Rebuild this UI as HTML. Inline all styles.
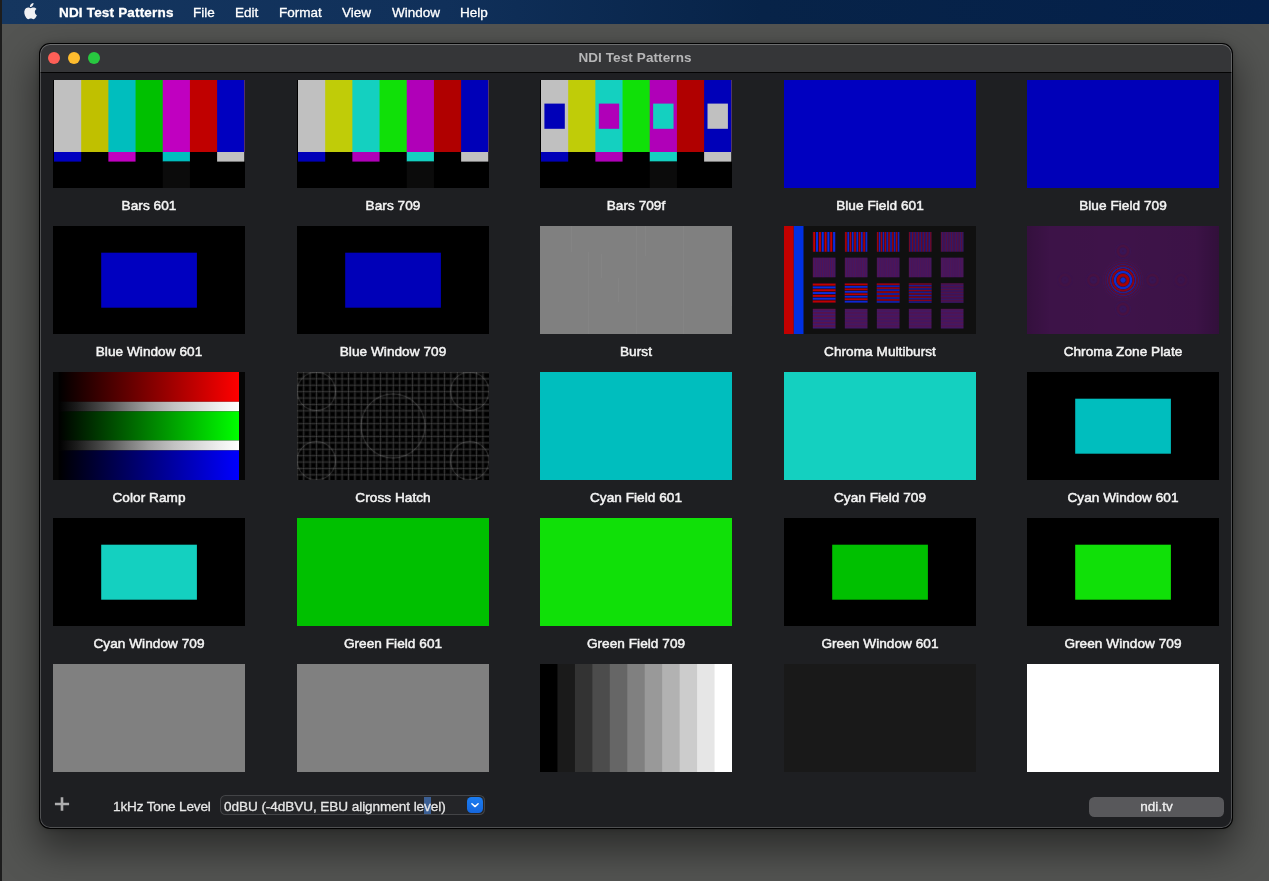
<!DOCTYPE html>
<html><head><meta charset="utf-8"><title>NDI Test Patterns</title>
<style>
html,body{margin:0;padding:0}
body{width:1269px;height:881px;overflow:hidden;position:relative;background:#535452;font-family:"Liberation Sans",sans-serif;-webkit-font-smoothing:antialiased}
#strip{position:absolute;left:0;top:0;width:2px;height:881px;background:#1d1d1d;z-index:5}
#menubar{position:absolute;left:2px;top:0;width:1267px;height:24px;background:linear-gradient(90deg,#15365f 0%,#10305a 35%,#072348 60%,#04204a 100%);color:#fff;font-size:13.5px;z-index:4}
#menubar span{will-change:transform;position:absolute;top:1px;margin-left:1px;-webkit-text-stroke:0.3px #fff;line-height:24px;white-space:nowrap}
#win{position:absolute;left:40px;top:44px;width:1192px;height:784px;border-radius:10px;background:#1e1f22;box-shadow:0 0 0 1px #000, 0 18px 38px 4px rgba(0,0,0,.48),0 0 6px rgba(0,0,0,.3);overflow:hidden}
#win:after{content:"";position:absolute;inset:0;border-radius:10px;box-shadow:inset 0 0 0 1px rgba(255,255,255,.22),inset 0 1px 0 rgba(255,255,255,.08);pointer-events:none}
#title{position:absolute;left:0;top:0;width:1192px;height:28px;background:#353638;border-bottom:1px solid #030303}
#title b{will-change:transform;position:absolute;left:0;width:1190px;text-align:center;top:0;line-height:28px;font-size:13.5px;color:#b6b6b7;letter-spacing:0.1px}
.tl{position:absolute;top:8px;width:12px;height:12px;border-radius:50%}
#clip{position:absolute;left:0;top:29px;width:1192px;height:707px;overflow:hidden}
.th{position:absolute;width:192px;height:108px;overflow:hidden}
.th svg{display:block}
.lb,.gs{will-change:transform}
.lb{position:absolute;width:260px;text-align:center;font-size:13.6px;font-weight:normal;-webkit-text-stroke:0.5px #f4f4f4;letter-spacing:0.05px;margin-top:0.6px;color:#f4f4f4;line-height:16px;white-space:nowrap}
#bot{position:absolute;left:0;top:736px;width:1192px;height:48px}
</style></head><body>
<div id="strip"></div>
<div id="menubar">
<svg style="position:absolute;left:21px;top:2px" width="15.3" height="19.6" viewBox="0 0 14 18" preserveAspectRatio="none"><path fill="#f1f1f3" d="M9.6 1c.1 1-.3 1.900-.85 2.550-.6.700-1.500 1.200-2.400 1.130-.1-.95.350-1.900.9-2.500C7.850 1.500 8.850 1.050 9.600 1zM12.400 6.500c-.1.060-1.600.900-1.580 2.700.02 2.100 1.880 2.820 1.900 2.830-.02.050-.300 1.020-.98 2-.6.860-1.200 1.700-2.180 1.720-.95.020-1.260-.560-2.350-.560s-1.430.540-2.330.580c-.940.030-1.650-.920-2.250-1.770C1.420 12.250.500 9.050 1.750 6.900c.620-1.080 1.730-1.760 2.930-1.780.920-.020 1.780.620 2.350.620.560 0 1.610-.760 2.720-.650.460.020 1.760.190 2.600 1.400z"/></svg>
<span style="left:56px;font-weight:bold;letter-spacing:0.18px">NDI Test Patterns</span>
<span style="left:190px">File</span>
<span style="left:232px">Edit</span>
<span style="left:276px">Format</span>
<span style="left:339px">View</span>
<span style="left:389px">Window</span>
<span style="left:457px">Help</span>
</div>
<div id="win">
<div id="title"><i class="tl" style="left:8px;background:#fe5f57"></i><i class="tl" style="left:28px;background:#febc2e"></i><i class="tl" style="left:48px;background:#28c840"></i><b>NDI Test Patterns</b></div>
<div id="clip">
<div class="th" style="left:13px;top:7px"><svg width="192" height="108" viewBox="0 0 192 108"><rect width="192" height="108" fill="#000"/><rect x="1.00" y="0" width="190.30" height="72" fill="#c0c0c0"/><rect x="28.19" y="0" width="163.11" height="72" fill="#c0c000"/><rect x="55.37" y="0" width="135.93" height="72" fill="#00bebe"/><rect x="82.56" y="0" width="108.74" height="72" fill="#00c000"/><rect x="109.74" y="0" width="81.56" height="72" fill="#c000c0"/><rect x="136.93" y="0" width="54.37" height="72" fill="#c00000"/><rect x="164.11" y="0" width="27.19" height="72" fill="#0000c0"/><rect x="1.00" y="72" width="27.19" height="9.6" fill="#0000c0"/><rect x="55.37" y="72" width="27.19" height="9.6" fill="#c000c0"/><rect x="109.74" y="72" width="27.19" height="9.6" fill="#00bebe"/><rect x="164.11" y="72" width="27.19" height="9.6" fill="#c0c0c0"/><rect x="109.74" y="81.6" width="27.19" height="26.4" fill="#0b0b0b"/></svg></div>
<div class="lb" style="left:-21px;top:124px">Bars 601</div>
<div class="th" style="left:257px;top:7px"><svg width="192" height="108" viewBox="0 0 192 108"><rect width="192" height="108" fill="#000"/><rect x="1.00" y="0" width="190.30" height="72" fill="#c0c0c0"/><rect x="28.19" y="0" width="163.11" height="72" fill="#c0cc08"/><rect x="55.37" y="0" width="135.93" height="72" fill="#14d0c0"/><rect x="82.56" y="0" width="108.74" height="72" fill="#10e008"/><rect x="109.74" y="0" width="81.56" height="72" fill="#b000b8"/><rect x="136.93" y="0" width="54.37" height="72" fill="#b00000"/><rect x="164.11" y="0" width="27.19" height="72" fill="#0000b8"/><rect x="1.00" y="72" width="27.19" height="9.6" fill="#0000b8"/><rect x="55.37" y="72" width="27.19" height="9.6" fill="#b000b8"/><rect x="109.74" y="72" width="27.19" height="9.6" fill="#14d0c0"/><rect x="164.11" y="72" width="27.19" height="9.6" fill="#c0c0c0"/><rect x="109.74" y="81.6" width="27.19" height="26.4" fill="#0b0b0b"/></svg></div>
<div class="lb" style="left:223px;top:124px">Bars 709</div>
<div class="th" style="left:500px;top:7px"><svg width="192" height="108" viewBox="0 0 192 108"><rect width="192" height="108" fill="#000"/><rect x="1.00" y="0" width="190.30" height="72" fill="#c0c0c0"/><rect x="28.19" y="0" width="163.11" height="72" fill="#c0cc08"/><rect x="55.37" y="0" width="135.93" height="72" fill="#14d0c0"/><rect x="82.56" y="0" width="108.74" height="72" fill="#10e008"/><rect x="109.74" y="0" width="81.56" height="72" fill="#b000b8"/><rect x="136.93" y="0" width="54.37" height="72" fill="#b00000"/><rect x="164.11" y="0" width="27.19" height="72" fill="#0000b8"/><rect x="1.00" y="72" width="27.19" height="9.6" fill="#0000b8"/><rect x="55.37" y="72" width="27.19" height="9.6" fill="#b000b8"/><rect x="109.74" y="72" width="27.19" height="9.6" fill="#14d0c0"/><rect x="164.11" y="72" width="27.19" height="9.6" fill="#c0c0c0"/><rect x="109.74" y="81.6" width="27.19" height="26.4" fill="#0b0b0b"/><rect x="4.40" y="23.6" width="20.4" height="25.2" fill="#0000b8"/><rect x="58.77" y="23.6" width="20.4" height="25.2" fill="#b000b8"/><rect x="113.14" y="23.6" width="20.4" height="25.2" fill="#14d0c0"/><rect x="167.51" y="23.6" width="20.4" height="25.2" fill="#c0c0c0"/></svg></div>
<div class="lb" style="left:466px;top:124px">Bars 709f</div>
<div class="th" style="left:744px;top:7px"><div style="width:192px;height:108px;background:#0000c0"></div></div>
<div class="lb" style="left:710px;top:124px">Blue Field 601</div>
<div class="th" style="left:987px;top:7px"><div style="width:192px;height:108px;background:#0000b8"></div></div>
<div class="lb" style="left:953px;top:124px">Blue Field 709</div>
<div class="th" style="left:13px;top:153px"><svg width="192" height="108" viewBox="0 0 192 108" ><rect width="192" height="108" fill="#000"/><rect x="48.2" y="26.7" width="95.7" height="55" fill="#0000c0"/></svg></div>
<div class="lb" style="left:-21px;top:270px">Blue Window 601</div>
<div class="th" style="left:257px;top:153px"><svg width="192" height="108" viewBox="0 0 192 108" ><rect width="192" height="108" fill="#000"/><rect x="48.2" y="26.7" width="95.7" height="55" fill="#0000b8"/></svg></div>
<div class="lb" style="left:223px;top:270px">Blue Window 709</div>
<div class="th" style="left:500px;top:153px"><svg width="192" height="108" viewBox="0 0 192 108" ><rect width="192" height="108" fill="#808080"/><rect x="48" y="26" width="1" height="82" fill="#fff" fill-opacity="0.035"/><rect x="96" y="0" width="1" height="108" fill="#fff" fill-opacity="0.035"/><rect x="143" y="0" width="1" height="108" fill="#fff" fill-opacity="0.035"/><rect x="31" y="0" width="1" height="26" fill="#fff" fill-opacity="0.035"/><rect x="61" y="28" width="1" height="24" fill="#fff" fill-opacity="0.035"/><rect x="78" y="52" width="1" height="24" fill="#fff" fill-opacity="0.035"/><rect x="105" y="0" width="1" height="30" fill="#fff" fill-opacity="0.035"/><rect x="191" y="26" width="1" height="54" fill="#fff" fill-opacity="0.035"/></svg></div>
<div class="lb" style="left:466px;top:270px">Burst</div>
<div class="th" style="left:744px;top:153px"><svg width="192" height="108" viewBox="0 0 192 108" ><rect width="192" height="108" fill="#101010"/><rect x="0" y="0" width="9.8" height="108" fill="#c20000"/><rect x="9.8" y="0" width="9.7" height="108" fill="#0030e2"/><rect x="28.80" y="6.00" width="22.7" height="19.7" fill="#48175a"/><rect x="28.80" y="6.00" width="22.7" height="19.7" fill="#16081a" fill-opacity="0.90"/><rect x="29.20" y="6.00" width="2.04" height="19.7" fill="#c20000" fill-opacity="1.0"/><rect x="32.03" y="6.00" width="2.04" height="19.7" fill="#0a2ce0" fill-opacity="1.0"/><rect x="34.87" y="6.00" width="2.04" height="19.7" fill="#c20000" fill-opacity="1.0"/><rect x="37.71" y="6.00" width="2.04" height="19.7" fill="#0a2ce0" fill-opacity="1.0"/><rect x="40.55" y="6.00" width="2.04" height="19.7" fill="#c20000" fill-opacity="1.0"/><rect x="43.38" y="6.00" width="2.04" height="19.7" fill="#0a2ce0" fill-opacity="1.0"/><rect x="46.22" y="6.00" width="2.04" height="19.7" fill="#c20000" fill-opacity="1.0"/><rect x="49.06" y="6.00" width="2.04" height="19.7" fill="#0a2ce0" fill-opacity="1.0"/><rect x="60.80" y="6.00" width="22.7" height="19.7" fill="#48175a"/><rect x="60.80" y="6.00" width="22.7" height="19.7" fill="#16081a" fill-opacity="0.81"/><rect x="61.12" y="6.00" width="1.63" height="19.7" fill="#c20000" fill-opacity="0.9"/><rect x="63.39" y="6.00" width="1.63" height="19.7" fill="#0a2ce0" fill-opacity="0.9"/><rect x="65.66" y="6.00" width="1.63" height="19.7" fill="#c20000" fill-opacity="0.9"/><rect x="67.93" y="6.00" width="1.63" height="19.7" fill="#0a2ce0" fill-opacity="0.9"/><rect x="70.20" y="6.00" width="1.63" height="19.7" fill="#c20000" fill-opacity="0.9"/><rect x="72.47" y="6.00" width="1.63" height="19.7" fill="#0a2ce0" fill-opacity="0.9"/><rect x="74.74" y="6.00" width="1.63" height="19.7" fill="#c20000" fill-opacity="0.9"/><rect x="77.01" y="6.00" width="1.63" height="19.7" fill="#0a2ce0" fill-opacity="0.9"/><rect x="79.28" y="6.00" width="1.63" height="19.7" fill="#c20000" fill-opacity="0.9"/><rect x="81.55" y="6.00" width="1.63" height="19.7" fill="#0a2ce0" fill-opacity="0.9"/><rect x="92.80" y="6.00" width="22.7" height="19.7" fill="#48175a"/><rect x="92.80" y="6.00" width="22.7" height="19.7" fill="#16081a" fill-opacity="0.72"/><rect x="93.06" y="6.00" width="1.36" height="19.7" fill="#c20000" fill-opacity="0.8"/><rect x="94.96" y="6.00" width="1.36" height="19.7" fill="#0a2ce0" fill-opacity="0.8"/><rect x="96.85" y="6.00" width="1.36" height="19.7" fill="#c20000" fill-opacity="0.8"/><rect x="98.74" y="6.00" width="1.36" height="19.7" fill="#0a2ce0" fill-opacity="0.8"/><rect x="100.63" y="6.00" width="1.36" height="19.7" fill="#c20000" fill-opacity="0.8"/><rect x="102.52" y="6.00" width="1.36" height="19.7" fill="#0a2ce0" fill-opacity="0.8"/><rect x="104.41" y="6.00" width="1.36" height="19.7" fill="#c20000" fill-opacity="0.8"/><rect x="106.31" y="6.00" width="1.36" height="19.7" fill="#0a2ce0" fill-opacity="0.8"/><rect x="108.20" y="6.00" width="1.36" height="19.7" fill="#c20000" fill-opacity="0.8"/><rect x="110.09" y="6.00" width="1.36" height="19.7" fill="#0a2ce0" fill-opacity="0.8"/><rect x="111.98" y="6.00" width="1.36" height="19.7" fill="#c20000" fill-opacity="0.8"/><rect x="113.87" y="6.00" width="1.36" height="19.7" fill="#0a2ce0" fill-opacity="0.8"/><rect x="124.80" y="6.00" width="22.7" height="19.7" fill="#48175a"/><rect x="124.80" y="6.00" width="22.7" height="19.7" fill="#16081a" fill-opacity="0.41"/><rect x="125.01" y="6.00" width="1.09" height="19.7" fill="#c20000" fill-opacity="0.45"/><rect x="126.53" y="6.00" width="1.09" height="19.7" fill="#0a2ce0" fill-opacity="0.45"/><rect x="128.04" y="6.00" width="1.09" height="19.7" fill="#c20000" fill-opacity="0.45"/><rect x="129.55" y="6.00" width="1.09" height="19.7" fill="#0a2ce0" fill-opacity="0.45"/><rect x="131.07" y="6.00" width="1.09" height="19.7" fill="#c20000" fill-opacity="0.45"/><rect x="132.58" y="6.00" width="1.09" height="19.7" fill="#0a2ce0" fill-opacity="0.45"/><rect x="134.09" y="6.00" width="1.09" height="19.7" fill="#c20000" fill-opacity="0.45"/><rect x="135.61" y="6.00" width="1.09" height="19.7" fill="#0a2ce0" fill-opacity="0.45"/><rect x="137.12" y="6.00" width="1.09" height="19.7" fill="#c20000" fill-opacity="0.45"/><rect x="138.63" y="6.00" width="1.09" height="19.7" fill="#0a2ce0" fill-opacity="0.45"/><rect x="140.15" y="6.00" width="1.09" height="19.7" fill="#c20000" fill-opacity="0.45"/><rect x="141.66" y="6.00" width="1.09" height="19.7" fill="#0a2ce0" fill-opacity="0.45"/><rect x="143.17" y="6.00" width="1.09" height="19.7" fill="#c20000" fill-opacity="0.45"/><rect x="144.69" y="6.00" width="1.09" height="19.7" fill="#0a2ce0" fill-opacity="0.45"/><rect x="146.20" y="6.00" width="1.09" height="19.7" fill="#c20000" fill-opacity="0.45"/><rect x="156.80" y="6.00" width="22.7" height="19.7" fill="#48175a"/><rect x="156.80" y="6.00" width="22.7" height="19.7" fill="#16081a" fill-opacity="0.20"/><rect x="156.98" y="6.00" width="0.91" height="19.7" fill="#c20000" fill-opacity="0.22"/><rect x="158.24" y="6.00" width="0.91" height="19.7" fill="#0a2ce0" fill-opacity="0.22"/><rect x="159.50" y="6.00" width="0.91" height="19.7" fill="#c20000" fill-opacity="0.22"/><rect x="160.76" y="6.00" width="0.91" height="19.7" fill="#0a2ce0" fill-opacity="0.22"/><rect x="162.02" y="6.00" width="0.91" height="19.7" fill="#c20000" fill-opacity="0.22"/><rect x="163.28" y="6.00" width="0.91" height="19.7" fill="#0a2ce0" fill-opacity="0.22"/><rect x="164.54" y="6.00" width="0.91" height="19.7" fill="#c20000" fill-opacity="0.22"/><rect x="165.80" y="6.00" width="0.91" height="19.7" fill="#0a2ce0" fill-opacity="0.22"/><rect x="167.07" y="6.00" width="0.91" height="19.7" fill="#c20000" fill-opacity="0.22"/><rect x="168.33" y="6.00" width="0.91" height="19.7" fill="#0a2ce0" fill-opacity="0.22"/><rect x="169.59" y="6.00" width="0.91" height="19.7" fill="#c20000" fill-opacity="0.22"/><rect x="170.85" y="6.00" width="0.91" height="19.7" fill="#0a2ce0" fill-opacity="0.22"/><rect x="172.11" y="6.00" width="0.91" height="19.7" fill="#c20000" fill-opacity="0.22"/><rect x="173.37" y="6.00" width="0.91" height="19.7" fill="#0a2ce0" fill-opacity="0.22"/><rect x="174.63" y="6.00" width="0.91" height="19.7" fill="#c20000" fill-opacity="0.22"/><rect x="175.89" y="6.00" width="0.91" height="19.7" fill="#0a2ce0" fill-opacity="0.22"/><rect x="177.15" y="6.00" width="0.91" height="19.7" fill="#c20000" fill-opacity="0.22"/><rect x="178.42" y="6.00" width="0.91" height="19.7" fill="#0a2ce0" fill-opacity="0.22"/><rect x="28.80" y="31.60" width="22.7" height="19.7" fill="#48175a"/><rect x="28.80" y="31.60" width="1.14" height="19.7" fill="#c20000" fill-opacity="0.100"/><rect x="29.94" y="31.60" width="1.14" height="19.7" fill="#0a2ce0" fill-opacity="0.100"/><rect x="31.07" y="31.60" width="1.14" height="19.7" fill="#c20000" fill-opacity="0.100"/><rect x="32.20" y="31.60" width="1.14" height="19.7" fill="#0a2ce0" fill-opacity="0.100"/><rect x="33.34" y="31.60" width="1.14" height="19.7" fill="#c20000" fill-opacity="0.100"/><rect x="34.48" y="31.60" width="1.14" height="19.7" fill="#0a2ce0" fill-opacity="0.100"/><rect x="35.61" y="31.60" width="1.14" height="19.7" fill="#c20000" fill-opacity="0.100"/><rect x="36.75" y="31.60" width="1.14" height="19.7" fill="#0a2ce0" fill-opacity="0.100"/><rect x="37.88" y="31.60" width="1.14" height="19.7" fill="#c20000" fill-opacity="0.100"/><rect x="39.02" y="31.60" width="1.14" height="19.7" fill="#0a2ce0" fill-opacity="0.100"/><rect x="40.15" y="31.60" width="1.14" height="19.7" fill="#c20000" fill-opacity="0.100"/><rect x="41.28" y="31.60" width="1.14" height="19.7" fill="#0a2ce0" fill-opacity="0.100"/><rect x="42.42" y="31.60" width="1.14" height="19.7" fill="#c20000" fill-opacity="0.100"/><rect x="43.55" y="31.60" width="1.14" height="19.7" fill="#0a2ce0" fill-opacity="0.100"/><rect x="44.69" y="31.60" width="1.14" height="19.7" fill="#c20000" fill-opacity="0.100"/><rect x="45.83" y="31.60" width="1.14" height="19.7" fill="#0a2ce0" fill-opacity="0.100"/><rect x="46.96" y="31.60" width="1.14" height="19.7" fill="#c20000" fill-opacity="0.100"/><rect x="48.09" y="31.60" width="1.14" height="19.7" fill="#0a2ce0" fill-opacity="0.100"/><rect x="49.23" y="31.60" width="1.14" height="19.7" fill="#c20000" fill-opacity="0.100"/><rect x="50.37" y="31.60" width="1.14" height="19.7" fill="#0a2ce0" fill-opacity="0.100"/><rect x="60.80" y="31.60" width="22.7" height="19.7" fill="#48175a"/><rect x="60.80" y="31.60" width="1.14" height="19.7" fill="#c20000" fill-opacity="0.085"/><rect x="61.93" y="31.60" width="1.14" height="19.7" fill="#0a2ce0" fill-opacity="0.085"/><rect x="63.07" y="31.60" width="1.14" height="19.7" fill="#c20000" fill-opacity="0.085"/><rect x="64.20" y="31.60" width="1.14" height="19.7" fill="#0a2ce0" fill-opacity="0.085"/><rect x="65.34" y="31.60" width="1.14" height="19.7" fill="#c20000" fill-opacity="0.085"/><rect x="66.47" y="31.60" width="1.14" height="19.7" fill="#0a2ce0" fill-opacity="0.085"/><rect x="67.61" y="31.60" width="1.14" height="19.7" fill="#c20000" fill-opacity="0.085"/><rect x="68.75" y="31.60" width="1.14" height="19.7" fill="#0a2ce0" fill-opacity="0.085"/><rect x="69.88" y="31.60" width="1.14" height="19.7" fill="#c20000" fill-opacity="0.085"/><rect x="71.02" y="31.60" width="1.14" height="19.7" fill="#0a2ce0" fill-opacity="0.085"/><rect x="72.15" y="31.60" width="1.14" height="19.7" fill="#c20000" fill-opacity="0.085"/><rect x="73.28" y="31.60" width="1.14" height="19.7" fill="#0a2ce0" fill-opacity="0.085"/><rect x="74.42" y="31.60" width="1.14" height="19.7" fill="#c20000" fill-opacity="0.085"/><rect x="75.55" y="31.60" width="1.14" height="19.7" fill="#0a2ce0" fill-opacity="0.085"/><rect x="76.69" y="31.60" width="1.14" height="19.7" fill="#c20000" fill-opacity="0.085"/><rect x="77.82" y="31.60" width="1.14" height="19.7" fill="#0a2ce0" fill-opacity="0.085"/><rect x="78.96" y="31.60" width="1.14" height="19.7" fill="#c20000" fill-opacity="0.085"/><rect x="80.09" y="31.60" width="1.14" height="19.7" fill="#0a2ce0" fill-opacity="0.085"/><rect x="81.23" y="31.60" width="1.14" height="19.7" fill="#c20000" fill-opacity="0.085"/><rect x="82.36" y="31.60" width="1.14" height="19.7" fill="#0a2ce0" fill-opacity="0.085"/><rect x="92.80" y="31.60" width="22.7" height="19.7" fill="#48175a"/><rect x="92.80" y="31.60" width="1.14" height="19.7" fill="#c20000" fill-opacity="0.070"/><rect x="93.94" y="31.60" width="1.14" height="19.7" fill="#0a2ce0" fill-opacity="0.070"/><rect x="95.07" y="31.60" width="1.14" height="19.7" fill="#c20000" fill-opacity="0.070"/><rect x="96.20" y="31.60" width="1.14" height="19.7" fill="#0a2ce0" fill-opacity="0.070"/><rect x="97.34" y="31.60" width="1.14" height="19.7" fill="#c20000" fill-opacity="0.070"/><rect x="98.47" y="31.60" width="1.14" height="19.7" fill="#0a2ce0" fill-opacity="0.070"/><rect x="99.61" y="31.60" width="1.14" height="19.7" fill="#c20000" fill-opacity="0.070"/><rect x="100.75" y="31.60" width="1.14" height="19.7" fill="#0a2ce0" fill-opacity="0.070"/><rect x="101.88" y="31.60" width="1.14" height="19.7" fill="#c20000" fill-opacity="0.070"/><rect x="103.02" y="31.60" width="1.14" height="19.7" fill="#0a2ce0" fill-opacity="0.070"/><rect x="104.15" y="31.60" width="1.14" height="19.7" fill="#c20000" fill-opacity="0.070"/><rect x="105.28" y="31.60" width="1.14" height="19.7" fill="#0a2ce0" fill-opacity="0.070"/><rect x="106.42" y="31.60" width="1.14" height="19.7" fill="#c20000" fill-opacity="0.070"/><rect x="107.55" y="31.60" width="1.14" height="19.7" fill="#0a2ce0" fill-opacity="0.070"/><rect x="108.69" y="31.60" width="1.14" height="19.7" fill="#c20000" fill-opacity="0.070"/><rect x="109.82" y="31.60" width="1.14" height="19.7" fill="#0a2ce0" fill-opacity="0.070"/><rect x="110.96" y="31.60" width="1.14" height="19.7" fill="#c20000" fill-opacity="0.070"/><rect x="112.09" y="31.60" width="1.14" height="19.7" fill="#0a2ce0" fill-opacity="0.070"/><rect x="113.23" y="31.60" width="1.14" height="19.7" fill="#c20000" fill-opacity="0.070"/><rect x="114.36" y="31.60" width="1.14" height="19.7" fill="#0a2ce0" fill-opacity="0.070"/><rect x="124.80" y="31.60" width="22.7" height="19.7" fill="#48175a"/><rect x="124.80" y="31.60" width="1.14" height="19.7" fill="#c20000" fill-opacity="0.055"/><rect x="125.94" y="31.60" width="1.14" height="19.7" fill="#0a2ce0" fill-opacity="0.055"/><rect x="127.07" y="31.60" width="1.14" height="19.7" fill="#c20000" fill-opacity="0.055"/><rect x="128.20" y="31.60" width="1.14" height="19.7" fill="#0a2ce0" fill-opacity="0.055"/><rect x="129.34" y="31.60" width="1.14" height="19.7" fill="#c20000" fill-opacity="0.055"/><rect x="130.47" y="31.60" width="1.14" height="19.7" fill="#0a2ce0" fill-opacity="0.055"/><rect x="131.61" y="31.60" width="1.14" height="19.7" fill="#c20000" fill-opacity="0.055"/><rect x="132.75" y="31.60" width="1.14" height="19.7" fill="#0a2ce0" fill-opacity="0.055"/><rect x="133.88" y="31.60" width="1.14" height="19.7" fill="#c20000" fill-opacity="0.055"/><rect x="135.01" y="31.60" width="1.14" height="19.7" fill="#0a2ce0" fill-opacity="0.055"/><rect x="136.15" y="31.60" width="1.14" height="19.7" fill="#c20000" fill-opacity="0.055"/><rect x="137.28" y="31.60" width="1.14" height="19.7" fill="#0a2ce0" fill-opacity="0.055"/><rect x="138.42" y="31.60" width="1.14" height="19.7" fill="#c20000" fill-opacity="0.055"/><rect x="139.56" y="31.60" width="1.14" height="19.7" fill="#0a2ce0" fill-opacity="0.055"/><rect x="140.69" y="31.60" width="1.14" height="19.7" fill="#c20000" fill-opacity="0.055"/><rect x="141.82" y="31.60" width="1.14" height="19.7" fill="#0a2ce0" fill-opacity="0.055"/><rect x="142.96" y="31.60" width="1.14" height="19.7" fill="#c20000" fill-opacity="0.055"/><rect x="144.09" y="31.60" width="1.14" height="19.7" fill="#0a2ce0" fill-opacity="0.055"/><rect x="145.23" y="31.60" width="1.14" height="19.7" fill="#c20000" fill-opacity="0.055"/><rect x="146.37" y="31.60" width="1.14" height="19.7" fill="#0a2ce0" fill-opacity="0.055"/><rect x="156.80" y="31.60" width="22.7" height="19.7" fill="#48175a"/><rect x="156.80" y="31.60" width="1.14" height="19.7" fill="#c20000" fill-opacity="0.040"/><rect x="157.94" y="31.60" width="1.14" height="19.7" fill="#0a2ce0" fill-opacity="0.040"/><rect x="159.07" y="31.60" width="1.14" height="19.7" fill="#c20000" fill-opacity="0.040"/><rect x="160.21" y="31.60" width="1.14" height="19.7" fill="#0a2ce0" fill-opacity="0.040"/><rect x="161.34" y="31.60" width="1.14" height="19.7" fill="#c20000" fill-opacity="0.040"/><rect x="162.48" y="31.60" width="1.14" height="19.7" fill="#0a2ce0" fill-opacity="0.040"/><rect x="163.61" y="31.60" width="1.14" height="19.7" fill="#c20000" fill-opacity="0.040"/><rect x="164.75" y="31.60" width="1.14" height="19.7" fill="#0a2ce0" fill-opacity="0.040"/><rect x="165.88" y="31.60" width="1.14" height="19.7" fill="#c20000" fill-opacity="0.040"/><rect x="167.02" y="31.60" width="1.14" height="19.7" fill="#0a2ce0" fill-opacity="0.040"/><rect x="168.15" y="31.60" width="1.14" height="19.7" fill="#c20000" fill-opacity="0.040"/><rect x="169.29" y="31.60" width="1.14" height="19.7" fill="#0a2ce0" fill-opacity="0.040"/><rect x="170.42" y="31.60" width="1.14" height="19.7" fill="#c20000" fill-opacity="0.040"/><rect x="171.56" y="31.60" width="1.14" height="19.7" fill="#0a2ce0" fill-opacity="0.040"/><rect x="172.69" y="31.60" width="1.14" height="19.7" fill="#c20000" fill-opacity="0.040"/><rect x="173.83" y="31.60" width="1.14" height="19.7" fill="#0a2ce0" fill-opacity="0.040"/><rect x="174.96" y="31.60" width="1.14" height="19.7" fill="#c20000" fill-opacity="0.040"/><rect x="176.10" y="31.60" width="1.14" height="19.7" fill="#0a2ce0" fill-opacity="0.040"/><rect x="177.23" y="31.60" width="1.14" height="19.7" fill="#c20000" fill-opacity="0.040"/><rect x="178.37" y="31.60" width="1.14" height="19.7" fill="#0a2ce0" fill-opacity="0.040"/><rect x="28.80" y="57.20" width="22.7" height="19.7" fill="#48175a"/><rect x="28.80" y="57.20" width="22.7" height="19.7" fill="#16081a" fill-opacity="0.90"/><rect x="28.80" y="57.59" width="22.7" height="2.03" fill="#c20000" fill-opacity="1.0"/><rect x="28.80" y="60.41" width="22.7" height="2.03" fill="#0a2ce0" fill-opacity="1.0"/><rect x="28.80" y="63.22" width="22.7" height="2.03" fill="#c20000" fill-opacity="1.0"/><rect x="28.80" y="66.04" width="22.7" height="2.03" fill="#0a2ce0" fill-opacity="1.0"/><rect x="28.80" y="68.85" width="22.7" height="2.03" fill="#c20000" fill-opacity="1.0"/><rect x="28.80" y="71.67" width="22.7" height="2.03" fill="#0a2ce0" fill-opacity="1.0"/><rect x="28.80" y="74.48" width="22.7" height="2.03" fill="#c20000" fill-opacity="1.0"/><rect x="60.80" y="57.20" width="22.7" height="19.7" fill="#48175a"/><rect x="60.80" y="57.20" width="22.7" height="19.7" fill="#16081a" fill-opacity="0.85"/><rect x="60.80" y="57.54" width="22.7" height="1.77" fill="#c20000" fill-opacity="0.95"/><rect x="60.80" y="60.01" width="22.7" height="1.77" fill="#0a2ce0" fill-opacity="0.95"/><rect x="60.80" y="62.47" width="22.7" height="1.77" fill="#c20000" fill-opacity="0.95"/><rect x="60.80" y="64.93" width="22.7" height="1.77" fill="#0a2ce0" fill-opacity="0.95"/><rect x="60.80" y="67.39" width="22.7" height="1.77" fill="#c20000" fill-opacity="0.95"/><rect x="60.80" y="69.86" width="22.7" height="1.77" fill="#0a2ce0" fill-opacity="0.95"/><rect x="60.80" y="72.32" width="22.7" height="1.77" fill="#c20000" fill-opacity="0.95"/><rect x="60.80" y="74.78" width="22.7" height="1.77" fill="#0a2ce0" fill-opacity="0.95"/><rect x="92.80" y="57.20" width="22.7" height="19.7" fill="#48175a"/><rect x="92.80" y="57.20" width="22.7" height="19.7" fill="#16081a" fill-opacity="0.77"/><rect x="92.80" y="57.48" width="22.7" height="1.42" fill="#c20000" fill-opacity="0.85"/><rect x="92.80" y="59.45" width="22.7" height="1.42" fill="#0a2ce0" fill-opacity="0.85"/><rect x="92.80" y="61.42" width="22.7" height="1.42" fill="#c20000" fill-opacity="0.85"/><rect x="92.80" y="63.39" width="22.7" height="1.42" fill="#0a2ce0" fill-opacity="0.85"/><rect x="92.80" y="65.36" width="22.7" height="1.42" fill="#c20000" fill-opacity="0.85"/><rect x="92.80" y="67.33" width="22.7" height="1.42" fill="#0a2ce0" fill-opacity="0.85"/><rect x="92.80" y="69.30" width="22.7" height="1.42" fill="#c20000" fill-opacity="0.85"/><rect x="92.80" y="71.27" width="22.7" height="1.42" fill="#0a2ce0" fill-opacity="0.85"/><rect x="92.80" y="73.24" width="22.7" height="1.42" fill="#c20000" fill-opacity="0.85"/><rect x="92.80" y="75.21" width="22.7" height="1.42" fill="#0a2ce0" fill-opacity="0.85"/><rect x="124.80" y="57.20" width="22.7" height="19.7" fill="#48175a"/><rect x="124.80" y="57.20" width="22.7" height="19.7" fill="#16081a" fill-opacity="0.54"/><rect x="124.80" y="57.43" width="22.7" height="1.18" fill="#c20000" fill-opacity="0.6"/><rect x="124.80" y="59.07" width="22.7" height="1.18" fill="#0a2ce0" fill-opacity="0.6"/><rect x="124.80" y="60.71" width="22.7" height="1.18" fill="#c20000" fill-opacity="0.6"/><rect x="124.80" y="62.35" width="22.7" height="1.18" fill="#0a2ce0" fill-opacity="0.6"/><rect x="124.80" y="64.00" width="22.7" height="1.18" fill="#c20000" fill-opacity="0.6"/><rect x="124.80" y="65.64" width="22.7" height="1.18" fill="#0a2ce0" fill-opacity="0.6"/><rect x="124.80" y="67.28" width="22.7" height="1.18" fill="#c20000" fill-opacity="0.6"/><rect x="124.80" y="68.92" width="22.7" height="1.18" fill="#0a2ce0" fill-opacity="0.6"/><rect x="124.80" y="70.56" width="22.7" height="1.18" fill="#c20000" fill-opacity="0.6"/><rect x="124.80" y="72.20" width="22.7" height="1.18" fill="#0a2ce0" fill-opacity="0.6"/><rect x="124.80" y="73.85" width="22.7" height="1.18" fill="#c20000" fill-opacity="0.6"/><rect x="124.80" y="75.49" width="22.7" height="1.18" fill="#0a2ce0" fill-opacity="0.6"/><rect x="156.80" y="57.20" width="22.7" height="19.7" fill="#48175a"/><rect x="156.80" y="57.20" width="22.7" height="19.7" fill="#16081a" fill-opacity="0.14"/><rect x="156.80" y="57.40" width="22.7" height="1.01" fill="#c20000" fill-opacity="0.15"/><rect x="156.80" y="58.80" width="22.7" height="1.01" fill="#0a2ce0" fill-opacity="0.15"/><rect x="156.80" y="60.21" width="22.7" height="1.01" fill="#c20000" fill-opacity="0.15"/><rect x="156.80" y="61.62" width="22.7" height="1.01" fill="#0a2ce0" fill-opacity="0.15"/><rect x="156.80" y="63.03" width="22.7" height="1.01" fill="#c20000" fill-opacity="0.15"/><rect x="156.80" y="64.43" width="22.7" height="1.01" fill="#0a2ce0" fill-opacity="0.15"/><rect x="156.80" y="65.84" width="22.7" height="1.01" fill="#c20000" fill-opacity="0.15"/><rect x="156.80" y="67.25" width="22.7" height="1.01" fill="#0a2ce0" fill-opacity="0.15"/><rect x="156.80" y="68.65" width="22.7" height="1.01" fill="#c20000" fill-opacity="0.15"/><rect x="156.80" y="70.06" width="22.7" height="1.01" fill="#0a2ce0" fill-opacity="0.15"/><rect x="156.80" y="71.47" width="22.7" height="1.01" fill="#c20000" fill-opacity="0.15"/><rect x="156.80" y="72.88" width="22.7" height="1.01" fill="#0a2ce0" fill-opacity="0.15"/><rect x="156.80" y="74.28" width="22.7" height="1.01" fill="#c20000" fill-opacity="0.15"/><rect x="156.80" y="75.69" width="22.7" height="1.01" fill="#0a2ce0" fill-opacity="0.15"/><rect x="28.80" y="82.80" width="22.7" height="19.7" fill="#48175a"/><rect x="28.80" y="82.80" width="22.7" height="1.64" fill="#c20000" fill-opacity="0.160"/><rect x="28.80" y="84.44" width="22.7" height="1.64" fill="#0a2ce0" fill-opacity="0.160"/><rect x="28.80" y="86.08" width="22.7" height="1.64" fill="#c20000" fill-opacity="0.160"/><rect x="28.80" y="87.73" width="22.7" height="1.64" fill="#0a2ce0" fill-opacity="0.160"/><rect x="28.80" y="89.37" width="22.7" height="1.64" fill="#c20000" fill-opacity="0.160"/><rect x="28.80" y="91.01" width="22.7" height="1.64" fill="#0a2ce0" fill-opacity="0.160"/><rect x="28.80" y="92.65" width="22.7" height="1.64" fill="#c20000" fill-opacity="0.160"/><rect x="28.80" y="94.29" width="22.7" height="1.64" fill="#0a2ce0" fill-opacity="0.160"/><rect x="28.80" y="95.93" width="22.7" height="1.64" fill="#c20000" fill-opacity="0.160"/><rect x="28.80" y="97.58" width="22.7" height="1.64" fill="#0a2ce0" fill-opacity="0.160"/><rect x="28.80" y="99.22" width="22.7" height="1.64" fill="#c20000" fill-opacity="0.160"/><rect x="28.80" y="100.86" width="22.7" height="1.64" fill="#0a2ce0" fill-opacity="0.160"/><rect x="60.80" y="82.80" width="22.7" height="19.7" fill="#48175a"/><rect x="60.80" y="82.80" width="22.7" height="1.64" fill="#c20000" fill-opacity="0.070"/><rect x="60.80" y="84.44" width="22.7" height="1.64" fill="#0a2ce0" fill-opacity="0.070"/><rect x="60.80" y="86.08" width="22.7" height="1.64" fill="#c20000" fill-opacity="0.070"/><rect x="60.80" y="87.73" width="22.7" height="1.64" fill="#0a2ce0" fill-opacity="0.070"/><rect x="60.80" y="89.37" width="22.7" height="1.64" fill="#c20000" fill-opacity="0.070"/><rect x="60.80" y="91.01" width="22.7" height="1.64" fill="#0a2ce0" fill-opacity="0.070"/><rect x="60.80" y="92.65" width="22.7" height="1.64" fill="#c20000" fill-opacity="0.070"/><rect x="60.80" y="94.29" width="22.7" height="1.64" fill="#0a2ce0" fill-opacity="0.070"/><rect x="60.80" y="95.93" width="22.7" height="1.64" fill="#c20000" fill-opacity="0.070"/><rect x="60.80" y="97.58" width="22.7" height="1.64" fill="#0a2ce0" fill-opacity="0.070"/><rect x="60.80" y="99.22" width="22.7" height="1.64" fill="#c20000" fill-opacity="0.070"/><rect x="60.80" y="100.86" width="22.7" height="1.64" fill="#0a2ce0" fill-opacity="0.070"/><rect x="92.80" y="82.80" width="22.7" height="19.7" fill="#48175a"/><rect x="92.80" y="82.80" width="22.7" height="1.64" fill="#c20000" fill-opacity="0.070"/><rect x="92.80" y="84.44" width="22.7" height="1.64" fill="#0a2ce0" fill-opacity="0.070"/><rect x="92.80" y="86.08" width="22.7" height="1.64" fill="#c20000" fill-opacity="0.070"/><rect x="92.80" y="87.73" width="22.7" height="1.64" fill="#0a2ce0" fill-opacity="0.070"/><rect x="92.80" y="89.37" width="22.7" height="1.64" fill="#c20000" fill-opacity="0.070"/><rect x="92.80" y="91.01" width="22.7" height="1.64" fill="#0a2ce0" fill-opacity="0.070"/><rect x="92.80" y="92.65" width="22.7" height="1.64" fill="#c20000" fill-opacity="0.070"/><rect x="92.80" y="94.29" width="22.7" height="1.64" fill="#0a2ce0" fill-opacity="0.070"/><rect x="92.80" y="95.93" width="22.7" height="1.64" fill="#c20000" fill-opacity="0.070"/><rect x="92.80" y="97.58" width="22.7" height="1.64" fill="#0a2ce0" fill-opacity="0.070"/><rect x="92.80" y="99.22" width="22.7" height="1.64" fill="#c20000" fill-opacity="0.070"/><rect x="92.80" y="100.86" width="22.7" height="1.64" fill="#0a2ce0" fill-opacity="0.070"/><rect x="124.80" y="82.80" width="22.7" height="19.7" fill="#48175a"/><rect x="124.80" y="82.80" width="22.7" height="1.64" fill="#c20000" fill-opacity="0.070"/><rect x="124.80" y="84.44" width="22.7" height="1.64" fill="#0a2ce0" fill-opacity="0.070"/><rect x="124.80" y="86.08" width="22.7" height="1.64" fill="#c20000" fill-opacity="0.070"/><rect x="124.80" y="87.73" width="22.7" height="1.64" fill="#0a2ce0" fill-opacity="0.070"/><rect x="124.80" y="89.37" width="22.7" height="1.64" fill="#c20000" fill-opacity="0.070"/><rect x="124.80" y="91.01" width="22.7" height="1.64" fill="#0a2ce0" fill-opacity="0.070"/><rect x="124.80" y="92.65" width="22.7" height="1.64" fill="#c20000" fill-opacity="0.070"/><rect x="124.80" y="94.29" width="22.7" height="1.64" fill="#0a2ce0" fill-opacity="0.070"/><rect x="124.80" y="95.93" width="22.7" height="1.64" fill="#c20000" fill-opacity="0.070"/><rect x="124.80" y="97.58" width="22.7" height="1.64" fill="#0a2ce0" fill-opacity="0.070"/><rect x="124.80" y="99.22" width="22.7" height="1.64" fill="#c20000" fill-opacity="0.070"/><rect x="124.80" y="100.86" width="22.7" height="1.64" fill="#0a2ce0" fill-opacity="0.070"/><rect x="156.80" y="82.80" width="22.7" height="19.7" fill="#48175a"/><rect x="156.80" y="82.80" width="22.7" height="1.64" fill="#c20000" fill-opacity="0.070"/><rect x="156.80" y="84.44" width="22.7" height="1.64" fill="#0a2ce0" fill-opacity="0.070"/><rect x="156.80" y="86.08" width="22.7" height="1.64" fill="#c20000" fill-opacity="0.070"/><rect x="156.80" y="87.73" width="22.7" height="1.64" fill="#0a2ce0" fill-opacity="0.070"/><rect x="156.80" y="89.37" width="22.7" height="1.64" fill="#c20000" fill-opacity="0.070"/><rect x="156.80" y="91.01" width="22.7" height="1.64" fill="#0a2ce0" fill-opacity="0.070"/><rect x="156.80" y="92.65" width="22.7" height="1.64" fill="#c20000" fill-opacity="0.070"/><rect x="156.80" y="94.29" width="22.7" height="1.64" fill="#0a2ce0" fill-opacity="0.070"/><rect x="156.80" y="95.93" width="22.7" height="1.64" fill="#c20000" fill-opacity="0.070"/><rect x="156.80" y="97.58" width="22.7" height="1.64" fill="#0a2ce0" fill-opacity="0.070"/><rect x="156.80" y="99.22" width="22.7" height="1.64" fill="#c20000" fill-opacity="0.070"/><rect x="156.80" y="100.86" width="22.7" height="1.64" fill="#0a2ce0" fill-opacity="0.070"/></svg></div>
<div class="lb" style="left:710px;top:270px">Chroma Multiburst</div>
<div class="th" style="left:987px;top:153px"><svg width="192" height="108" viewBox="0 0 192 108" ><defs><linearGradient id="zp_v" x1="0" y1="0" x2="1" y2="0"><stop offset="0" stop-color="#000" stop-opacity="0.16"/><stop offset="0.12" stop-color="#000" stop-opacity="0.02"/><stop offset="0.5" stop-color="#000" stop-opacity="0"/><stop offset="0.88" stop-color="#000" stop-opacity="0.04"/><stop offset="1" stop-color="#000" stop-opacity="0.2"/></linearGradient><radialGradient id="zp_r" gradientUnits="userSpaceOnUse" cx="96" cy="54.1" r="22.0"><stop offset="0.0000" stop-color="rgb(12,46,208)"/><stop offset="0.0038" stop-color="rgb(12,46,208)"/><stop offset="0.0077" stop-color="rgb(12,46,208)"/><stop offset="0.0115" stop-color="rgb(12,46,208)"/><stop offset="0.0154" stop-color="rgb(12,46,208)"/><stop offset="0.0192" stop-color="rgb(12,46,208)"/><stop offset="0.0231" stop-color="rgb(12,46,208)"/><stop offset="0.0269" stop-color="rgb(12,46,208)"/><stop offset="0.0308" stop-color="rgb(12,46,208)"/><stop offset="0.0346" stop-color="rgb(12,46,208)"/><stop offset="0.0385" stop-color="rgb(12,46,208)"/><stop offset="0.0423" stop-color="rgb(12,46,208)"/><stop offset="0.0462" stop-color="rgb(12,46,208)"/><stop offset="0.0500" stop-color="rgb(12,46,208)"/><stop offset="0.0538" stop-color="rgb(12,46,208)"/><stop offset="0.0577" stop-color="rgb(12,46,208)"/><stop offset="0.0615" stop-color="rgb(12,46,208)"/><stop offset="0.0654" stop-color="rgb(12,46,208)"/><stop offset="0.0692" stop-color="rgb(12,46,208)"/><stop offset="0.0731" stop-color="rgb(12,46,208)"/><stop offset="0.0769" stop-color="rgb(12,46,208)"/><stop offset="0.0808" stop-color="rgb(12,46,208)"/><stop offset="0.0846" stop-color="rgb(12,46,208)"/><stop offset="0.0885" stop-color="rgb(14,45,201)"/><stop offset="0.0923" stop-color="rgb(17,43,194)"/><stop offset="0.0962" stop-color="rgb(20,42,186)"/><stop offset="0.1000" stop-color="rgb(23,40,177)"/><stop offset="0.1038" stop-color="rgb(27,38,168)"/><stop offset="0.1077" stop-color="rgb(31,36,157)"/><stop offset="0.1115" stop-color="rgb(35,34,146)"/><stop offset="0.1154" stop-color="rgb(40,31,134)"/><stop offset="0.1192" stop-color="rgb(44,29,121)"/><stop offset="0.1231" stop-color="rgb(49,26,107)"/><stop offset="0.1269" stop-color="rgb(55,23,92)"/><stop offset="0.1308" stop-color="rgb(60,20,77)"/><stop offset="0.1346" stop-color="rgb(66,18,70)"/><stop offset="0.1385" stop-color="rgb(73,17,66)"/><stop offset="0.1423" stop-color="rgb(79,16,62)"/><stop offset="0.1462" stop-color="rgb(86,15,57)"/><stop offset="0.1500" stop-color="rgb(92,14,53)"/><stop offset="0.1538" stop-color="rgb(99,13,48)"/><stop offset="0.1577" stop-color="rgb(106,11,44)"/><stop offset="0.1615" stop-color="rgb(113,10,39)"/><stop offset="0.1654" stop-color="rgb(120,9,35)"/><stop offset="0.1692" stop-color="rgb(126,8,30)"/><stop offset="0.1731" stop-color="rgb(133,7,26)"/><stop offset="0.1769" stop-color="rgb(140,6,21)"/><stop offset="0.1808" stop-color="rgb(147,4,17)"/><stop offset="0.1846" stop-color="rgb(153,3,13)"/><stop offset="0.1885" stop-color="rgb(159,2,9)"/><stop offset="0.1923" stop-color="rgb(165,1,5)"/><stop offset="0.1962" stop-color="rgb(171,0,1)"/><stop offset="0.2000" stop-color="rgb(172,0,0)"/><stop offset="0.2038" stop-color="rgb(172,0,0)"/><stop offset="0.2077" stop-color="rgb(172,0,0)"/><stop offset="0.2115" stop-color="rgb(172,0,0)"/><stop offset="0.2154" stop-color="rgb(172,0,0)"/><stop offset="0.2192" stop-color="rgb(172,0,0)"/><stop offset="0.2231" stop-color="rgb(172,0,0)"/><stop offset="0.2269" stop-color="rgb(172,0,0)"/><stop offset="0.2308" stop-color="rgb(172,0,0)"/><stop offset="0.2346" stop-color="rgb(172,0,0)"/><stop offset="0.2385" stop-color="rgb(172,0,0)"/><stop offset="0.2423" stop-color="rgb(172,0,0)"/><stop offset="0.2462" stop-color="rgb(172,0,0)"/><stop offset="0.2500" stop-color="rgb(172,0,0)"/><stop offset="0.2538" stop-color="rgb(172,0,0)"/><stop offset="0.2577" stop-color="rgb(172,0,0)"/><stop offset="0.2615" stop-color="rgb(172,0,0)"/><stop offset="0.2654" stop-color="rgb(165,1,5)"/><stop offset="0.2692" stop-color="rgb(156,3,10)"/><stop offset="0.2731" stop-color="rgb(147,4,17)"/><stop offset="0.2769" stop-color="rgb(137,6,23)"/><stop offset="0.2808" stop-color="rgb(126,8,31)"/><stop offset="0.2846" stop-color="rgb(114,10,38)"/><stop offset="0.2885" stop-color="rgb(102,12,47)"/><stop offset="0.2923" stop-color="rgb(89,14,55)"/><stop offset="0.2962" stop-color="rgb(76,17,64)"/><stop offset="0.3000" stop-color="rgb(62,19,73)"/><stop offset="0.3038" stop-color="rgb(57,22,87)"/><stop offset="0.3077" stop-color="rgb(52,24,100)"/><stop offset="0.3115" stop-color="rgb(47,27,114)"/><stop offset="0.3154" stop-color="rgb(42,30,127)"/><stop offset="0.3192" stop-color="rgb(37,33,141)"/><stop offset="0.3231" stop-color="rgb(32,35,154)"/><stop offset="0.3269" stop-color="rgb(27,38,166)"/><stop offset="0.3308" stop-color="rgb(23,40,178)"/><stop offset="0.3346" stop-color="rgb(19,42,189)"/><stop offset="0.3385" stop-color="rgb(15,44,200)"/><stop offset="0.3423" stop-color="rgb(12,46,208)"/><stop offset="0.3462" stop-color="rgb(12,46,208)"/><stop offset="0.3500" stop-color="rgb(12,46,208)"/><stop offset="0.3538" stop-color="rgb(12,46,208)"/><stop offset="0.3577" stop-color="rgb(12,46,208)"/><stop offset="0.3615" stop-color="rgb(12,46,208)"/><stop offset="0.3654" stop-color="rgb(12,46,208)"/><stop offset="0.3692" stop-color="rgb(12,46,208)"/><stop offset="0.3731" stop-color="rgb(12,46,207)"/><stop offset="0.3769" stop-color="rgb(13,46,207)"/><stop offset="0.3808" stop-color="rgb(13,46,206)"/><stop offset="0.3846" stop-color="rgb(13,45,205)"/><stop offset="0.3885" stop-color="rgb(13,45,204)"/><stop offset="0.3923" stop-color="rgb(14,45,203)"/><stop offset="0.3962" stop-color="rgb(18,43,192)"/><stop offset="0.4000" stop-color="rgb(23,40,178)"/><stop offset="0.4038" stop-color="rgb(28,37,164)"/><stop offset="0.4077" stop-color="rgb(34,34,149)"/><stop offset="0.4115" stop-color="rgb(40,31,133)"/><stop offset="0.4154" stop-color="rgb(46,28,116)"/><stop offset="0.4192" stop-color="rgb(52,24,99)"/><stop offset="0.4231" stop-color="rgb(59,21,82)"/><stop offset="0.4269" stop-color="rgb(68,18,69)"/><stop offset="0.4308" stop-color="rgb(81,16,60)"/><stop offset="0.4346" stop-color="rgb(94,14,52)"/><stop offset="0.4385" stop-color="rgb(106,11,44)"/><stop offset="0.4423" stop-color="rgb(117,10,37)"/><stop offset="0.4462" stop-color="rgb(127,8,30)"/><stop offset="0.4500" stop-color="rgb(137,6,23)"/><stop offset="0.4538" stop-color="rgb(145,5,18)"/><stop offset="0.4577" stop-color="rgb(152,3,13)"/><stop offset="0.4615" stop-color="rgb(151,4,14)"/><stop offset="0.4654" stop-color="rgb(150,4,15)"/><stop offset="0.4692" stop-color="rgb(148,4,16)"/><stop offset="0.4731" stop-color="rgb(147,4,16)"/><stop offset="0.4769" stop-color="rgb(146,4,17)"/><stop offset="0.4808" stop-color="rgb(145,5,18)"/><stop offset="0.4846" stop-color="rgb(144,5,19)"/><stop offset="0.4885" stop-color="rgb(143,5,19)"/><stop offset="0.4923" stop-color="rgb(142,5,20)"/><stop offset="0.4962" stop-color="rgb(140,5,21)"/><stop offset="0.5000" stop-color="rgb(138,6,23)"/><stop offset="0.5038" stop-color="rgb(129,7,29)"/><stop offset="0.5077" stop-color="rgb(119,9,35)"/><stop offset="0.5115" stop-color="rgb(108,11,42)"/><stop offset="0.5154" stop-color="rgb(97,13,50)"/><stop offset="0.5192" stop-color="rgb(86,15,57)"/><stop offset="0.5231" stop-color="rgb(74,17,65)"/><stop offset="0.5269" stop-color="rgb(63,19,72)"/><stop offset="0.5308" stop-color="rgb(57,22,87)"/><stop offset="0.5346" stop-color="rgb(51,25,101)"/><stop offset="0.5385" stop-color="rgb(46,27,115)"/><stop offset="0.5423" stop-color="rgb(42,30,127)"/><stop offset="0.5462" stop-color="rgb(38,32,138)"/><stop offset="0.5500" stop-color="rgb(35,34,147)"/><stop offset="0.5538" stop-color="rgb(34,34,148)"/><stop offset="0.5577" stop-color="rgb(35,34,147)"/><stop offset="0.5615" stop-color="rgb(35,34,146)"/><stop offset="0.5654" stop-color="rgb(36,33,144)"/><stop offset="0.5692" stop-color="rgb(36,33,143)"/><stop offset="0.5731" stop-color="rgb(36,33,142)"/><stop offset="0.5769" stop-color="rgb(37,33,141)"/><stop offset="0.5808" stop-color="rgb(37,32,139)"/><stop offset="0.5846" stop-color="rgb(39,31,134)"/><stop offset="0.5885" stop-color="rgb(43,29,124)"/><stop offset="0.5923" stop-color="rgb(47,27,112)"/><stop offset="0.5962" stop-color="rgb(52,24,100)"/><stop offset="0.6000" stop-color="rgb(57,22,88)"/><stop offset="0.6038" stop-color="rgb(61,19,75)"/><stop offset="0.6077" stop-color="rgb(70,18,68)"/><stop offset="0.6115" stop-color="rgb(79,16,61)"/><stop offset="0.6154" stop-color="rgb(88,15,56)"/><stop offset="0.6192" stop-color="rgb(96,13,51)"/><stop offset="0.6231" stop-color="rgb(102,12,47)"/><stop offset="0.6269" stop-color="rgb(105,12,45)"/><stop offset="0.6308" stop-color="rgb(104,12,45)"/><stop offset="0.6346" stop-color="rgb(103,12,46)"/><stop offset="0.6385" stop-color="rgb(102,12,46)"/><stop offset="0.6423" stop-color="rgb(101,12,47)"/><stop offset="0.6462" stop-color="rgb(100,12,48)"/><stop offset="0.6500" stop-color="rgb(100,13,48)"/><stop offset="0.6538" stop-color="rgb(98,13,49)"/><stop offset="0.6577" stop-color="rgb(92,14,53)"/><stop offset="0.6615" stop-color="rgb(85,15,58)"/><stop offset="0.6654" stop-color="rgb(77,16,63)"/><stop offset="0.6692" stop-color="rgb(69,18,68)"/><stop offset="0.6731" stop-color="rgb(62,19,74)"/><stop offset="0.6769" stop-color="rgb(58,21,83)"/><stop offset="0.6808" stop-color="rgb(55,23,92)"/><stop offset="0.6846" stop-color="rgb(52,24,100)"/><stop offset="0.6885" stop-color="rgb(50,26,106)"/><stop offset="0.6923" stop-color="rgb(49,26,109)"/><stop offset="0.6962" stop-color="rgb(49,26,108)"/><stop offset="0.7000" stop-color="rgb(49,26,107)"/><stop offset="0.7038" stop-color="rgb(50,26,107)"/><stop offset="0.7077" stop-color="rgb(50,26,106)"/><stop offset="0.7115" stop-color="rgb(50,25,105)"/><stop offset="0.7154" stop-color="rgb(51,25,104)"/><stop offset="0.7192" stop-color="rgb(53,24,97)"/><stop offset="0.7231" stop-color="rgb(56,22,90)"/><stop offset="0.7269" stop-color="rgb(58,21,83)"/><stop offset="0.7308" stop-color="rgb(61,19,75)"/><stop offset="0.7346" stop-color="rgb(66,18,70)"/><stop offset="0.7385" stop-color="rgb(72,17,66)"/><stop offset="0.7423" stop-color="rgb(77,16,63)"/><stop offset="0.7462" stop-color="rgb(81,16,61)"/><stop offset="0.7500" stop-color="rgb(82,15,59)"/><stop offset="0.7538" stop-color="rgb(82,16,60)"/><stop offset="0.7577" stop-color="rgb(81,16,60)"/><stop offset="0.7615" stop-color="rgb(81,16,60)"/><stop offset="0.7654" stop-color="rgb(80,16,61)"/><stop offset="0.7692" stop-color="rgb(80,16,61)"/><stop offset="0.7731" stop-color="rgb(77,16,63)"/><stop offset="0.7769" stop-color="rgb(73,17,65)"/><stop offset="0.7808" stop-color="rgb(69,18,69)"/><stop offset="0.7846" stop-color="rgb(64,19,72)"/><stop offset="0.7885" stop-color="rgb(61,20,76)"/><stop offset="0.7923" stop-color="rgb(59,21,81)"/><stop offset="0.7962" stop-color="rgb(57,22,86)"/><stop offset="0.8000" stop-color="rgb(56,22,90)"/><stop offset="0.8038" stop-color="rgb(56,22,90)"/><stop offset="0.8077" stop-color="rgb(56,22,90)"/><stop offset="0.8115" stop-color="rgb(56,22,89)"/><stop offset="0.8154" stop-color="rgb(56,22,89)"/><stop offset="0.8192" stop-color="rgb(56,22,89)"/><stop offset="0.8231" stop-color="rgb(57,22,87)"/><stop offset="0.8269" stop-color="rgb(58,21,84)"/><stop offset="0.8308" stop-color="rgb(60,20,79)"/><stop offset="0.8346" stop-color="rgb(61,19,75)"/><stop offset="0.8385" stop-color="rgb(64,19,72)"/><stop offset="0.8423" stop-color="rgb(67,18,70)"/><stop offset="0.8462" stop-color="rgb(70,18,68)"/><stop offset="0.8500" stop-color="rgb(72,17,66)"/><stop offset="0.8538" stop-color="rgb(72,17,66)"/><stop offset="0.8577" stop-color="rgb(72,17,67)"/><stop offset="0.8615" stop-color="rgb(71,17,67)"/><stop offset="0.8654" stop-color="rgb(71,17,67)"/><stop offset="0.8692" stop-color="rgb(71,18,67)"/><stop offset="0.8731" stop-color="rgb(68,18,69)"/><stop offset="0.8769" stop-color="rgb(66,18,71)"/><stop offset="0.8808" stop-color="rgb(63,19,73)"/><stop offset="0.8846" stop-color="rgb(61,20,76)"/><stop offset="0.8885" stop-color="rgb(60,20,79)"/><stop offset="0.8923" stop-color="rgb(59,21,81)"/><stop offset="0.8962" stop-color="rgb(59,21,82)"/><stop offset="0.9000" stop-color="rgb(59,21,82)"/><stop offset="0.9038" stop-color="rgb(59,21,81)"/><stop offset="0.9077" stop-color="rgb(59,21,81)"/><stop offset="0.9115" stop-color="rgb(59,21,81)"/><stop offset="0.9154" stop-color="rgb(60,20,78)"/><stop offset="0.9192" stop-color="rgb(61,19,75)"/><stop offset="0.9231" stop-color="rgb(62,19,73)"/><stop offset="0.9269" stop-color="rgb(64,19,72)"/><stop offset="0.9308" stop-color="rgb(66,18,70)"/><stop offset="0.9346" stop-color="rgb(67,18,70)"/><stop offset="0.9385" stop-color="rgb(67,18,70)"/><stop offset="0.9423" stop-color="rgb(67,18,70)"/><stop offset="0.9462" stop-color="rgb(67,18,70)"/><stop offset="0.9500" stop-color="rgb(67,18,70)"/><stop offset="0.9538" stop-color="rgb(66,18,70)"/><stop offset="0.9577" stop-color="rgb(64,19,71)"/><stop offset="0.9615" stop-color="rgb(63,19,73)"/><stop offset="0.9654" stop-color="rgb(62,19,74)"/><stop offset="0.9692" stop-color="rgb(61,19,75)"/><stop offset="0.9731" stop-color="rgb(61,20,76)"/><stop offset="0.9769" stop-color="rgb(61,19,75)"/><stop offset="0.9808" stop-color="rgb(61,19,75)"/><stop offset="0.9846" stop-color="rgb(61,19,74)"/><stop offset="0.9885" stop-color="rgb(62,19,74)"/><stop offset="0.9923" stop-color="rgb(62,19,74)"/><stop offset="0.9962" stop-color="rgb(62,19,73)"/><stop offset="1.0000" stop-color="rgb(62,19,73)"/></radialGradient></defs><rect width="192" height="108" fill="#3e1349"/><circle cx="96" cy="54.1" r="22.0" fill="url(#zp_r)"/><g fill="none" stroke-opacity="0.09"><circle cx="66.5" cy="54.1" r="2.2" stroke="#0c2ccc" stroke-width="2.4"/><circle cx="66.5" cy="54.1" r="5.2" stroke="#b00000" stroke-width="1.8"/><circle cx="66.5" cy="54.1" r="7.6" stroke="#0c2ccc" stroke-width="1.2" stroke-opacity="0.054"/></g><g fill="none" stroke-opacity="0.09"><circle cx="125.5" cy="54.1" r="2.2" stroke="#0c2ccc" stroke-width="2.4"/><circle cx="125.5" cy="54.1" r="5.2" stroke="#b00000" stroke-width="1.8"/><circle cx="125.5" cy="54.1" r="7.6" stroke="#0c2ccc" stroke-width="1.2" stroke-opacity="0.054"/></g><g fill="none" stroke-opacity="0.1"><circle cx="96" cy="25.1" r="2.2" stroke="#0c2ccc" stroke-width="2.4"/><circle cx="96" cy="25.1" r="5.2" stroke="#b00000" stroke-width="1.8"/><circle cx="96" cy="25.1" r="7.6" stroke="#0c2ccc" stroke-width="1.2" stroke-opacity="0.060"/></g><g fill="none" stroke-opacity="0.1"><circle cx="96" cy="83.1" r="2.2" stroke="#0c2ccc" stroke-width="2.4"/><circle cx="96" cy="83.1" r="5.2" stroke="#b00000" stroke-width="1.8"/><circle cx="96" cy="83.1" r="7.6" stroke="#0c2ccc" stroke-width="1.2" stroke-opacity="0.060"/></g><g fill="none" stroke-opacity="0.05"><circle cx="38" cy="54.1" r="2.2" stroke="#0c2ccc" stroke-width="2.4"/><circle cx="38" cy="54.1" r="5.2" stroke="#b00000" stroke-width="1.8"/><circle cx="38" cy="54.1" r="7.6" stroke="#0c2ccc" stroke-width="1.2" stroke-opacity="0.030"/></g><g fill="none" stroke-opacity="0.05"><circle cx="154" cy="54.1" r="2.2" stroke="#0c2ccc" stroke-width="2.4"/><circle cx="154" cy="54.1" r="5.2" stroke="#b00000" stroke-width="1.8"/><circle cx="154" cy="54.1" r="7.6" stroke="#0c2ccc" stroke-width="1.2" stroke-opacity="0.030"/></g><rect width="192" height="108" fill="url(#zp_v)"/></svg></div>
<div class="lb" style="left:953px;top:270px">Chroma Zone Plate</div>
<div class="th" style="left:13px;top:299px"><svg width="192" height="108" viewBox="0 0 192 108" ><defs><linearGradient id="cr_r" gradientUnits="userSpaceOnUse" x1="5.6" y1="0" x2="186.0" y2="0"><stop offset="0" stop-color="#000"/><stop offset="1" stop-color="#ff0000"/></linearGradient><linearGradient id="cr_g" gradientUnits="userSpaceOnUse" x1="5.6" y1="0" x2="186.0" y2="0"><stop offset="0" stop-color="#000"/><stop offset="1" stop-color="#00ff00"/></linearGradient><linearGradient id="cr_b" gradientUnits="userSpaceOnUse" x1="5.6" y1="0" x2="186.0" y2="0"><stop offset="0" stop-color="#000"/><stop offset="1" stop-color="#0000ff"/></linearGradient><linearGradient id="cr_w" gradientUnits="userSpaceOnUse" x1="5.6" y1="0" x2="186.0" y2="0"><stop offset="0" stop-color="#000000"/><stop offset="0.1" stop-color="#1c1c1c"/><stop offset="0.25" stop-color="#4c4c4c"/><stop offset="0.38" stop-color="#7a7a7a"/><stop offset="0.5" stop-color="#a1a1a1"/><stop offset="0.64" stop-color="#c2c2c2"/><stop offset="0.78" stop-color="#dbdbdb"/><stop offset="0.9" stop-color="#f0f0f0"/><stop offset="1" stop-color="#ffffff"/></linearGradient></defs><rect width="192" height="108" fill="#050505"/><rect x="5.6" y="0" width="180.4" height="29.8" fill="url(#cr_r)"/><rect x="5.6" y="29.8" width="180.4" height="9.6" fill="url(#cr_w)"/><rect x="5.6" y="39.4" width="180.4" height="29.1" fill="url(#cr_g)"/><rect x="5.6" y="68.5" width="180.4" height="9.9" fill="url(#cr_w)"/><rect x="5.6" y="78.4" width="180.4" height="29.6" fill="url(#cr_b)"/></svg></div>
<div class="lb" style="left:-21px;top:416px">Color Ramp</div>
<div class="th" style="left:257px;top:299px"><svg width="192" height="108" viewBox="0 0 192 108" ><rect width="192" height="108" fill="#000"/><g stroke="#fff" fill="none"><path d="M0.30 0V108M6.70 0V108M13.10 0V108M19.50 0V108M25.90 0V108M32.30 0V108M38.70 0V108M45.10 0V108M51.50 0V108M57.90 0V108M64.30 0V108M70.70 0V108M77.10 0V108M83.50 0V108M89.90 0V108M96.30 0V108M102.70 0V108M109.10 0V108M115.50 0V108M121.90 0V108M128.30 0V108M134.70 0V108M141.10 0V108M147.50 0V108M153.90 0V108M160.30 0V108M166.70 0V108M173.10 0V108M179.50 0V108M185.90 0V108M0 0.45H192M0 6.85H192M0 13.25H192M0 19.65H192M0 26.05H192M0 32.45H192M0 38.85H192M0 45.25H192M0 51.65H192M0 58.05H192M0 64.45H192M0 70.85H192M0 77.25H192M0 83.65H192M0 90.05H192M0 96.45H192M0 102.85H192" stroke-opacity="0.06" stroke-width="3"/><path d="M0.30 0V108M6.70 0V108M13.10 0V108M19.50 0V108M25.90 0V108M32.30 0V108M38.70 0V108M45.10 0V108M51.50 0V108M57.90 0V108M64.30 0V108M70.70 0V108M77.10 0V108M83.50 0V108M89.90 0V108M96.30 0V108M102.70 0V108M109.10 0V108M115.50 0V108M121.90 0V108M128.30 0V108M134.70 0V108M141.10 0V108M147.50 0V108M153.90 0V108M160.30 0V108M166.70 0V108M173.10 0V108M179.50 0V108M185.90 0V108M0 0.45H192M0 6.85H192M0 13.25H192M0 19.65H192M0 26.05H192M0 32.45H192M0 38.85H192M0 45.25H192M0 51.65H192M0 58.05H192M0 64.45H192M0 70.85H192M0 77.25H192M0 83.65H192M0 90.05H192M0 96.45H192M0 102.85H192" stroke-opacity="0.13" stroke-width="1"/><g stroke-opacity="0.045" stroke-width="2.6"><circle cx="96" cy="54" r="32"/><circle cx="19.3" cy="19.3" r="19.2"/><circle cx="172.7" cy="19.3" r="19.2"/><circle cx="19.3" cy="88.7" r="19.2"/><circle cx="172.7" cy="88.7" r="19.2"/></g><g stroke-opacity="0.11" stroke-width="1"><circle cx="96" cy="54" r="32"/><circle cx="19.3" cy="19.3" r="19.2"/><circle cx="172.7" cy="19.3" r="19.2"/><circle cx="19.3" cy="88.7" r="19.2"/><circle cx="172.7" cy="88.7" r="19.2"/></g></g></svg></div>
<div class="lb" style="left:223px;top:416px">Cross Hatch</div>
<div class="th" style="left:500px;top:299px"><div style="width:192px;height:108px;background:#00bebe"></div></div>
<div class="lb" style="left:466px;top:416px">Cyan Field 601</div>
<div class="th" style="left:744px;top:299px"><div style="width:192px;height:108px;background:#14d0c0"></div></div>
<div class="lb" style="left:710px;top:416px">Cyan Field 709</div>
<div class="th" style="left:987px;top:299px"><svg width="192" height="108" viewBox="0 0 192 108" ><rect width="192" height="108" fill="#000"/><rect x="48.2" y="26.7" width="95.7" height="55" fill="#00bebe"/></svg></div>
<div class="lb" style="left:953px;top:416px">Cyan Window 601</div>
<div class="th" style="left:13px;top:445px"><svg width="192" height="108" viewBox="0 0 192 108" ><rect width="192" height="108" fill="#000"/><rect x="48.2" y="26.7" width="95.7" height="55" fill="#14d0c0"/></svg></div>
<div class="lb" style="left:-21px;top:562px">Cyan Window 709</div>
<div class="th" style="left:257px;top:445px"><div style="width:192px;height:108px;background:#00c000"></div></div>
<div class="lb" style="left:223px;top:562px">Green Field 601</div>
<div class="th" style="left:500px;top:445px"><div style="width:192px;height:108px;background:#10e008"></div></div>
<div class="lb" style="left:466px;top:562px">Green Field 709</div>
<div class="th" style="left:744px;top:445px"><svg width="192" height="108" viewBox="0 0 192 108" ><rect width="192" height="108" fill="#000"/><rect x="48.2" y="26.7" width="95.7" height="55" fill="#00c000"/></svg></div>
<div class="lb" style="left:710px;top:562px">Green Window 601</div>
<div class="th" style="left:987px;top:445px"><svg width="192" height="108" viewBox="0 0 192 108" ><rect width="192" height="108" fill="#000"/><rect x="48.2" y="26.7" width="95.7" height="55" fill="#10e008"/></svg></div>
<div class="lb" style="left:953px;top:562px">Green Window 709</div>
<div class="th" style="left:13px;top:591px"><div style="width:192px;height:108px;background:#808080"></div></div>
<div class="th" style="left:257px;top:591px"><div style="width:192px;height:108px;background:#808080"></div></div>
<div class="th" style="left:500px;top:591px"><svg width="192" height="108" viewBox="0 0 192 108" ><rect x="0.000" y="0" width="192.000" height="108" fill="rgb(0,0,0)"/><rect x="17.455" y="0" width="174.545" height="108" fill="rgb(26,26,26)"/><rect x="34.909" y="0" width="157.091" height="108" fill="rgb(51,51,51)"/><rect x="52.364" y="0" width="139.636" height="108" fill="rgb(76,76,76)"/><rect x="69.818" y="0" width="122.182" height="108" fill="rgb(102,102,102)"/><rect x="87.273" y="0" width="104.727" height="108" fill="rgb(128,128,128)"/><rect x="104.727" y="0" width="87.273" height="108" fill="rgb(153,153,153)"/><rect x="122.182" y="0" width="69.818" height="108" fill="rgb(178,178,178)"/><rect x="139.636" y="0" width="52.364" height="108" fill="rgb(204,204,204)"/><rect x="157.091" y="0" width="34.909" height="108" fill="rgb(230,230,230)"/><rect x="174.545" y="0" width="17.455" height="108" fill="rgb(255,255,255)"/></svg></div>
<div class="th" style="left:744px;top:591px"><div style="width:192px;height:108px;background:#191919"></div></div>
<div class="th" style="left:987px;top:591px"><div style="width:192px;height:108px;background:#fff"></div></div>
</div>
<div id="bot">
<svg style="position:absolute;left:14px;top:15.700px" width="16" height="16" viewBox="0 0 16 16"><path d="M8 1.300v13.400M0.900 8h14.200" stroke="#adadae" stroke-width="2.600" fill="none"/></svg>
<span class="gs" style="position:absolute;left:72.500px;top:18.500px;font-size:13.6px;letter-spacing:-0.17px;-webkit-text-stroke:0.3px #e6e6e6;color:#e6e6e6;line-height:16px;white-space:nowrap">1kHz Tone Level</span>
<div style="position:absolute;left:180.300px;top:15.200px;width:264.500px;height:19.600px;border-radius:5.500px;background:#242528;box-shadow:0 0 0 1px #434447 inset;"></div>
<div style="position:absolute;left:384.300px;top:17px;width:6.700px;height:16.500px;background:#3b5f94"></div>
<span class="gs" style="position:absolute;left:183.500px;top:18.500px;font-size:13.6px;letter-spacing:-0.08px;-webkit-text-stroke:0.3px #e6e6e6;color:#e6e6e6;line-height:16px;white-space:nowrap">0dBU (-4dBVU, EBU alignment level)</span>
<div style="position:absolute;left:427px;top:17px;width:16px;height:16px;border-radius:4.500px;background:linear-gradient(#1b7df2,#1566dc)"></div>
<svg style="position:absolute;left:427px;top:17px" width="16" height="16" viewBox="0 0 16 16"><path d="M4.900 6.700l3.100 2.900 3.100-2.900" stroke="#fff" stroke-width="1.450" fill="none" stroke-linecap="round" stroke-linejoin="round"/></svg>
<div class="gs" style="position:absolute;left:1049px;top:17px;width:135px;height:20px;border-radius:5.500px;background:#58585b;color:#f0f0f0;font-size:13.6px;-webkit-text-stroke:0.3px #f0f0f0;text-align:center;line-height:20px">ndi.tv</div>
</div>
</div>
</body></html>
